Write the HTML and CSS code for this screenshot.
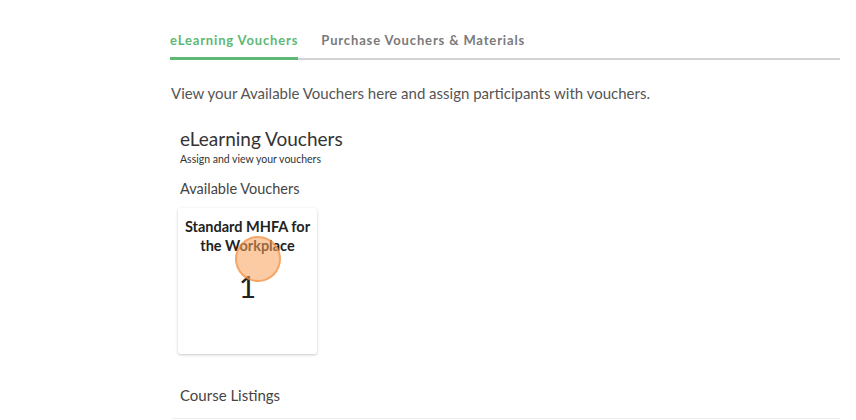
FILE: index.html
```html
<!DOCTYPE html>
<html>
<head>
<meta charset="utf-8">
<link rel="stylesheet" href="styles.css">
</head>
<body>
<div class="page">
  <div class="tabbar">
    <div class="tab active">eLearning Vouchers</div>
    <div class="tab">Purchase Vouchers &amp; Materials</div>
  </div>
  <p class="intro">View your Available Vouchers here and assign participants with vouchers.</p>
  <section class="panel">
    <h2 class="panel-title">eLearning Vouchers</h2>
    <div class="panel-sub">Assign and view your vouchers</div>
    <h3 class="section-title">Available Vouchers</h3>
    <div class="cards">
      <div class="card">
        <div class="card-title">Standard MHFA for the Workplace</div>
        <div class="card-count">1</div>
      </div>
    </div>
    <h3 class="listing-title">Course Listings</h3>
    <div class="rule"></div>
  </section>
</div>
<div class="cursor"></div>
</body>
</html>
```
FILE: styles.css
```css
html, body {
  margin: 0;
  padding: 0;
  background: #fff;
}
body {
  font-family: Lato, "Open Sans", Arial, sans-serif;
  color: #333;
  width: 856px;
  height: 420px;
  overflow: hidden;
  position: relative;
}
.page {
  padding-left: 170px;
  width: 670px;
}
.tabbar {
  margin-top: 33px;
  display: flex;
  align-items: flex-end;
  gap: 23px;
  box-shadow: inset 0 -2px 0 #d3d3d3;
}
.tab {
  flex: none;
  font-size: 13px;
  line-height: 15px;
  font-weight: 700;
  letter-spacing: 0.85px;
  color: #7a7a7a;
  padding-bottom: 12px;
}
.tab.active {
  color: #5db874;
  box-shadow: inset 0 -3px 0 #5db874;
}
.intro {
  margin: 24px 0 0 1px;
  font-size: 15px;
  line-height: 18px;
  color: #555;
}
.panel {
  padding-left: 10px;
  margin-top: 26px;
}
.panel-title {
  margin: 0;
  font-size: 19px;
  line-height: 22px;
  font-weight: 400;
  color: #333;
}
.panel-sub {
  margin-top: 2px;
  font-size: 10.5px;
  line-height: 14px;
  color: #333;
}
.section-title {
  margin: 14px 0 0;
  font-size: 14.5px;
  line-height: 18px;
  font-weight: 400;
  color: #444;
}
.cards {
  display: flex;
  margin-top: 10px;
  margin-left: -2px;
}
.card {
  width: 139px;
  height: 146px;
  box-sizing: border-box;
  border-radius: 3px;
  background: #fff;
  box-shadow: 0 1px 3px rgba(0,0,0,0.22);
  padding: 9px 2px 0;
  text-align: center;
}
.card-title {
  font-size: 14.5px;
  line-height: 19px;
  font-weight: 700;
  color: #222;
}
.card-count {
  margin-top: 15px;
  font-size: 30px;
  line-height: 32px;
  color: #222;
}
.listing-title {
  margin: 32px 0 0;
  font-size: 15px;
  line-height: 18px;
  font-weight: 400;
  color: #444;
}
.rule {
  margin: 14px 0 0 -8px;
  height: 1px;
  background: #eee;
}
.cursor {
  position: absolute;
  left: 235px;
  top: 236px;
  width: 42px;
  height: 42px;
  border-radius: 50%;
  background: rgba(250, 160, 90, 0.55);
  border: 2px solid rgba(240, 140, 60, 0.6);
}
```
